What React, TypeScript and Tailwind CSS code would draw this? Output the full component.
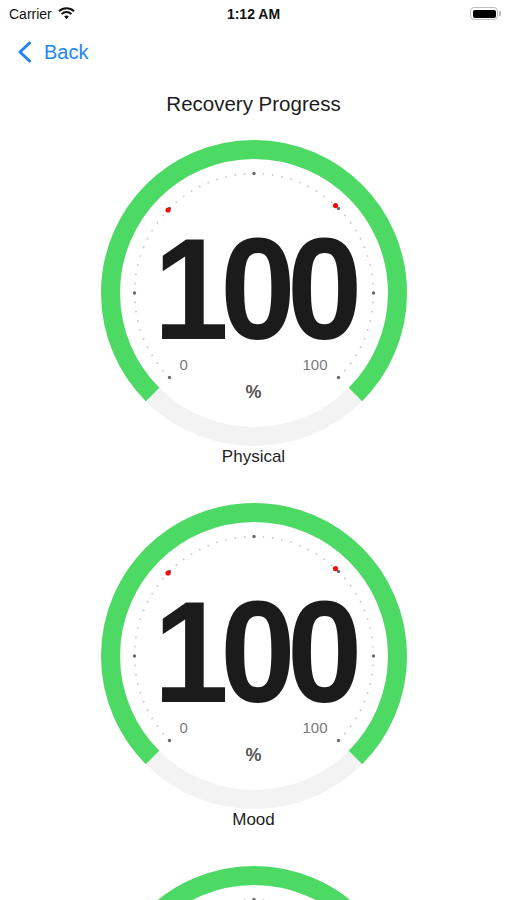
import React from 'react'

const GREEN = '#4cd964'

function polar(r: number, deg: number) {
  const a = (deg * Math.PI) / 180
  return { x: 153 + r * Math.sin(a), y: 153 - r * Math.cos(a) }
}

function Gauge({ label, partial }: { label: string; partial?: boolean }) {
  const start = polar(143.5, -135)
  const end = polar(143.5, 135)
  const ticks = Array.from({ length: 61 }, (_, i) => i)

  return (
    <div className="flex flex-col items-center">
      <div className="relative h-[306px] w-[306px]">
        <svg width="306" height="306" viewBox="0 0 306 306" className="absolute inset-0">
          <circle cx="153" cy="153" r="143.5" fill="none" stroke="#f3f3f3" strokeWidth="19" />
          <path
            d={`M ${start.x} ${start.y} A 143.5 143.5 0 1 1 ${end.x} ${end.y}`}
            fill="none"
            stroke={GREEN}
            strokeWidth="19"
          />
          {ticks.map((i) => {
            const major = i % 10 === 0
            const p = polar(119.5, -135 + i * 4.5)
            return (
              <circle
                key={i}
                cx={p.x}
                cy={p.y}
                r={major ? 1.7 : 0.9}
                fill={major ? '#6b6b6b' : '#c4c4c4'}
              />
            )
          })}
          {/* red markers */}
          <circle cx={polar(119.5, -46).x} cy={polar(119.5, -46).y} r="2.6" fill="#f01010" />
          <circle cx={polar(119.5, 43).x} cy={polar(119.5, 43).y} r="2.6" fill="#f01010" />
        </svg>

        {/* the third gauge is cut off by the screen edge, only its ring shows */}
        {!partial && (
          <>
            <div className="absolute left-0 right-0 top-[90px] flex justify-center">
              <span className="inline-block scale-x-[0.94] font-['Liberation_Sans',Arial,sans-serif] text-[144px] font-bold leading-[120px] tracking-[-9px] text-[#1b1b1b]">
                100
              </span>
            </div>
            <span className="absolute left-[79px] top-[215px] font-['Liberation_Sans',Arial,sans-serif] text-[15px] leading-[20px] text-[#7a7a7a]">
              0
            </span>
            <span className="absolute left-[202px] top-[215px] font-['Liberation_Sans',Arial,sans-serif] text-[15px] leading-[20px] text-[#7a7a7a]">
              100
            </span>
            <div className="absolute left-0 right-0 top-[240px] flex justify-center">
              <span className="font-['Liberation_Sans',Arial,sans-serif] text-[18px] font-semibold leading-[24px] text-[#555555]">
                %
              </span>
            </div>
          </>
        )}
      </div>
      {!partial && (
        <div className="h-[22px] font-['Liberation_Sans',Arial,sans-serif] text-[17px] leading-[22px] text-[#1e1e1e]">
          {label}
        </div>
      )}
    </div>
  )
}

export default function App() {
  return (
    <div className="h-[900px] w-[507px] overflow-hidden bg-white font-['Liberation_Sans',Arial,sans-serif]">
      {/* Status bar */}
      <div className="relative flex h-[27px] items-center pl-[9px] pr-[6px]">
        <div className="flex items-center gap-[6px]">
          <span className="text-[14px] leading-none text-[#111]">Carrier</span>
          <svg width="17" height="13" viewBox="0 0 17 13">
            <path d="M8.5 12.2 L6.2 9.6 A3.3 3.3 0 0 1 10.8 9.6 Z" fill="#111" />
            <path d="M3.6 7.1 A7 7 0 0 1 13.4 7.1" fill="none" stroke="#111" strokeWidth="2" />
            <path d="M1 4.3 A10.8 10.8 0 0 1 16 4.3" fill="none" stroke="#111" strokeWidth="2" />
          </svg>
        </div>
        <span className="absolute left-0 right-0 text-center text-[14px] font-bold leading-none text-[#111]">
          1:12 AM
        </span>
        <div className="ml-auto flex items-center">
          <div className="flex h-[13px] w-[28px] items-center rounded-[4px] border border-[#bdbdbd] p-[1.5px]">
            <div className="h-full w-full rounded-[2px] bg-black" />
          </div>
          <div className="ml-[1px] h-[5px] w-[2px] rounded-r-[1px] bg-[#bdbdbd]" />
        </div>
      </div>

      {/* Nav bar */}
      <div className="flex h-[50px] items-center pl-[17px]">
        <svg width="15" height="22" viewBox="0 0 15 22">
          <path d="M12.5 2 L3 11 L12.5 20" fill="none" stroke="#2186f4" strokeWidth="3" strokeLinecap="round" strokeLinejoin="round" />
        </svg>
        <span className="ml-[12px] text-[20px] leading-none text-[#2186f4]">Back</span>
      </div>

      <div className="mt-[13px] h-[28px] text-center text-[20.5px] leading-[28px] text-[#1c1c1c]">
        Recovery Progress
      </div>

      <div className="mt-[22px] flex flex-col items-center gap-[35px]">
        <Gauge label="Physical" />
        <Gauge label="Mood" />
        <Gauge label="Sleep" partial />
      </div>
    </div>
  )
}
